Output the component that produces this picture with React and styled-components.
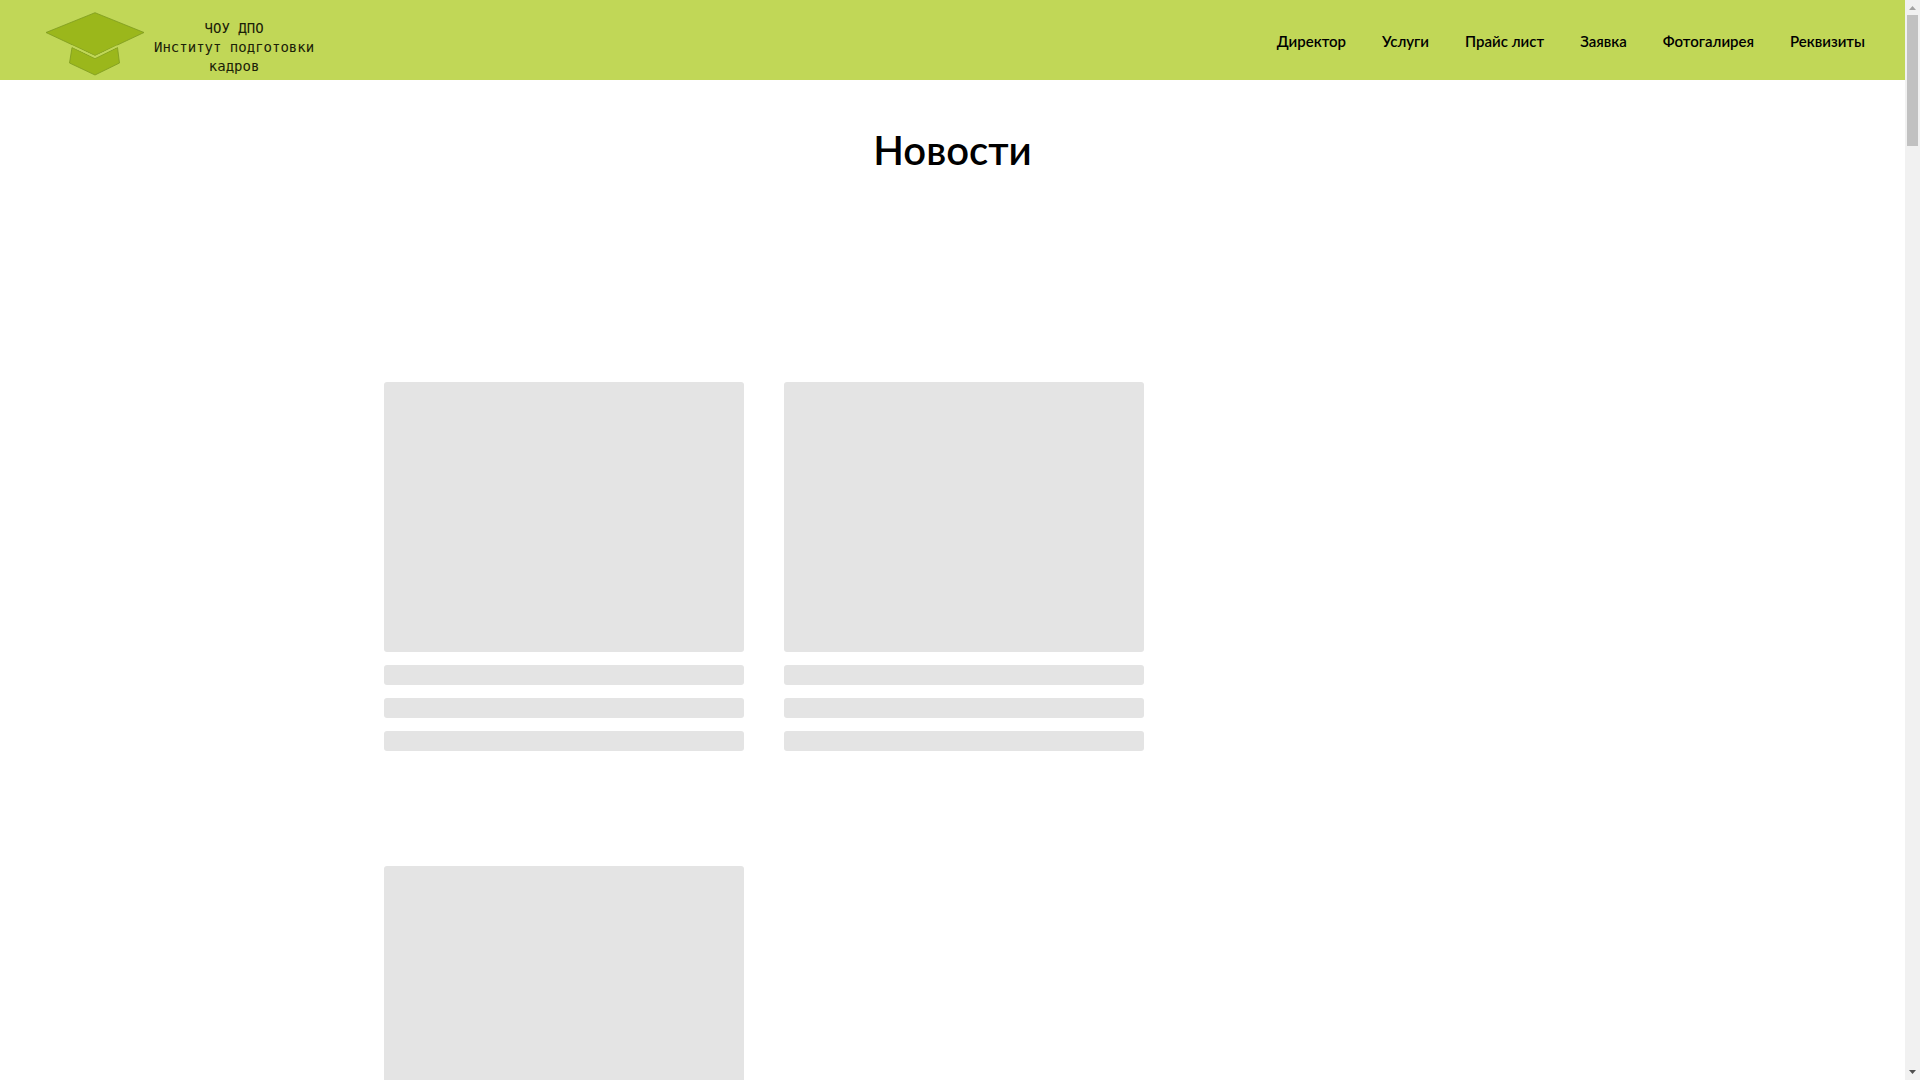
import React from "react";
import styled, { createGlobalStyle } from "styled-components";

const GlobalStyle = createGlobalStyle`
  * { box-sizing: border-box; }
  body { margin: 0; background: #fff; color: #000; font-family: Lato, "Noto Sans", sans-serif; }
`;

const Viewport = styled.div`
  display: flex;
  height: 100vh;
  overflow: hidden;
`;

const Page = styled.div`
  flex: 1;
  min-width: 0;
  overflow: hidden;
`;

const Header = styled.header`
  display: flex;
  align-items: center;
  justify-content: space-between;
  height: 80px;
  padding: 0 40px 0 45px;
  background: #c1d757;
`;

const Brand = styled.a`
  display: flex;
  align-items: center;
  gap: 8px;
  padding-top: 8px;
  color: #1b2108;
  text-decoration: none;
`;

const Cap = styled.svg`
  display: block;
  width: 101px;
  height: 64px;
`;

const BrandText = styled.span`
  padding-top: 6px;
  font: 14px/19px "DejaVu Sans Mono", monospace;
  text-align: center;
  white-space: pre-line;
`;

const Nav = styled.nav`
  display: flex;
  gap: 36px;
  padding-top: 2px;
`;

const NavLink = styled.a`
  color: #000;
  font-size: 15px;
  font-weight: 600;
  line-height: 24px;
  text-decoration: none;
`;

const Title = styled.h1`
  margin: 0;
  padding: 44px 20px 0;
  font-size: 40px;
  font-weight: 600;
  line-height: 52px;
  text-align: center;
`;

const Feed = styled.section`
  display: flex;
  flex-wrap: wrap;
  gap: 115px 40px;
  max-width: 1137px;
  margin: 206px auto 0;
`;

const Card = styled.article`
  display: grid;
  gap: 13px;
  width: 360px;
`;

const Placeholder = styled.div`
  height: ${({ $height }) => $height}px;
  border-radius: 3px;
  background: #e4e4e4;
`;

const Scrollbar = styled.div`
  display: flex;
  flex-direction: column;
  align-items: center;
  width: 15px;
  background: #f1f1f1;
`;

const Arrow = styled.svg`
  display: block;
  width: 15px;
  height: 15px;
`;

const Thumb = styled.div`
  width: 11px;
  height: 131px;
  margin-bottom: auto;
  background: #c1c1c1;
`;

const links = ["Директор", "Услуги", "Прайс лист", "Заявка", "Фотогалирея", "Реквизиты"];

export default function App() {
  return (
    <Viewport>
      <GlobalStyle />
      <Page>
        <Header>
          <Brand href="#">
            <Cap viewBox="0 0 101 64" aria-hidden="true">
              <g fill="#9bb71b" stroke="#7d9a20" strokeWidth="0.8">
                <path d="M27 35.5 50 46.500 72.500 35.500 74.500 51 50 63 24.500 51Z" />
                <path d="M1 20.500 50 .7 99 20.500 50 43.500Z" />
              </g>
              <path d="M27 34 50 45 72.500 34" fill="none" stroke="#c1d757" strokeWidth="1.600" />
            </Cap>
            <BrandText>{"ЧОУ ДПО\nИнститут подготовки\nкадров"}</BrandText>
          </Brand>
          <Nav>
            {links.map((label) => (
              <NavLink key={label} href="#">{label}</NavLink>
            ))}
          </Nav>
        </Header>
        <main>
          <Title>Новости</Title>
          <Feed aria-busy="true">
            {[0, 1, 2].map((card) => (
              <Card key={card}>
                <Placeholder $height={270} />
                <Placeholder $height={20} />
                <Placeholder $height={20} />
                <Placeholder $height={20} />
              </Card>
            ))}
          </Feed>
        </main>
      </Page>
      <Scrollbar aria-hidden="true">
        <Arrow viewBox="0 0 15 15"><path d="M4 10 7.500 6 11 10Z" fill="#a3a3a3" /></Arrow>
        <Thumb />
        <Arrow viewBox="0 0 15 15"><path d="M4 5 7.500 9 11 5Z" fill="#505050" /></Arrow>
      </Scrollbar>
    </Viewport>
  );
}
